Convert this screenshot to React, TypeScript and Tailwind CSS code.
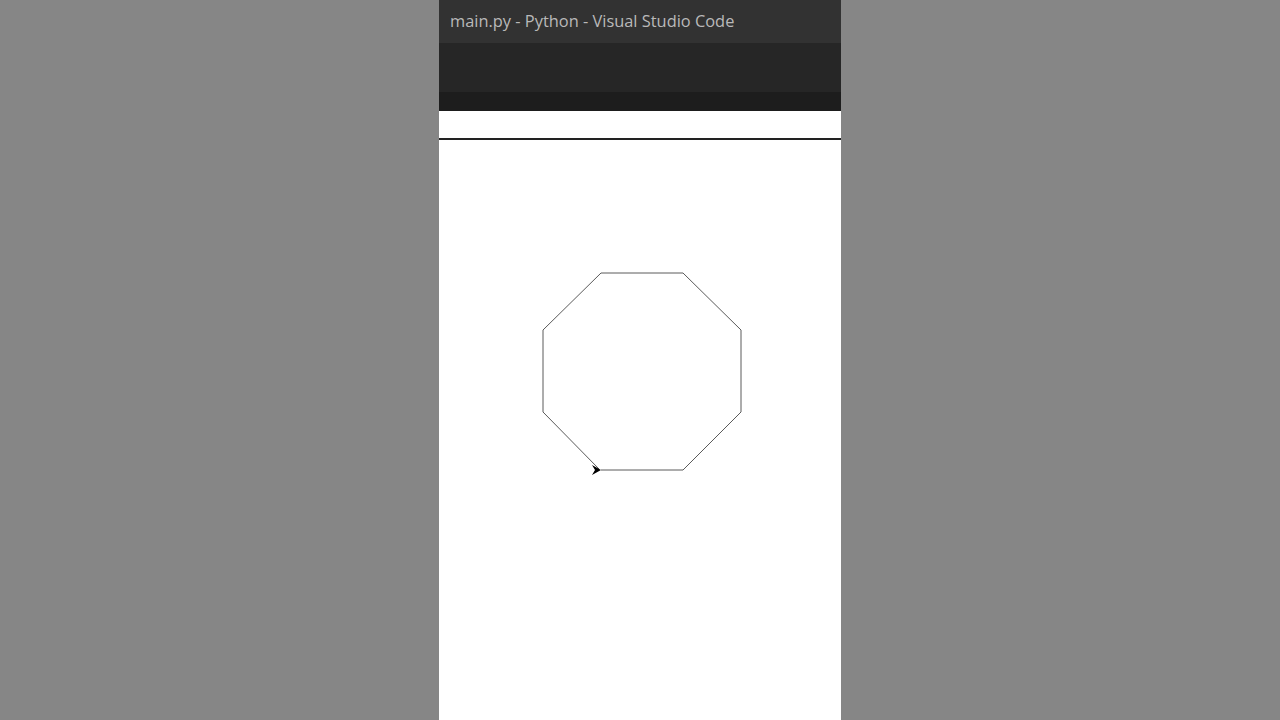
export default function App() {
  return (
    <div className="flex h-screen w-full justify-center overflow-hidden bg-[#868686]">
      <div className="flex w-[402px] flex-col bg-white">
        {/* Title bar */}
        <div
          className="flex h-[43px] items-center bg-[#323232] px-[11px] text-[16.4px] text-[#b9b9b9]"
          style={{ fontFamily: '"Open Sans", "Noto Sans", sans-serif' }}
        >
          main.py - Python - Visual Studio Code
        </div>
        <div className="h-[49px] bg-[#262626]" />
        <div className="h-[19px] bg-[#1d1d1d]" />

        {/* Turtle window */}
        <div className="h-[27px] bg-white" />
        <div className="h-[2px] bg-[#222]" />
        <div className="flex-1 bg-white">
          <svg width="402" height="580" viewBox="0 0 402 580">
            <polyline
              points="162,330 244,330 302,272 302,190 244,133 162,133 104,190 104,272 160,329"
              fill="none"
              stroke="#5a5a5a"
              strokeWidth="1"
            />
            <polygon points="162,330 153,325 156,330 153,335" fill="#000" />
          </svg>
        </div>
      </div>
    </div>
  );
}
